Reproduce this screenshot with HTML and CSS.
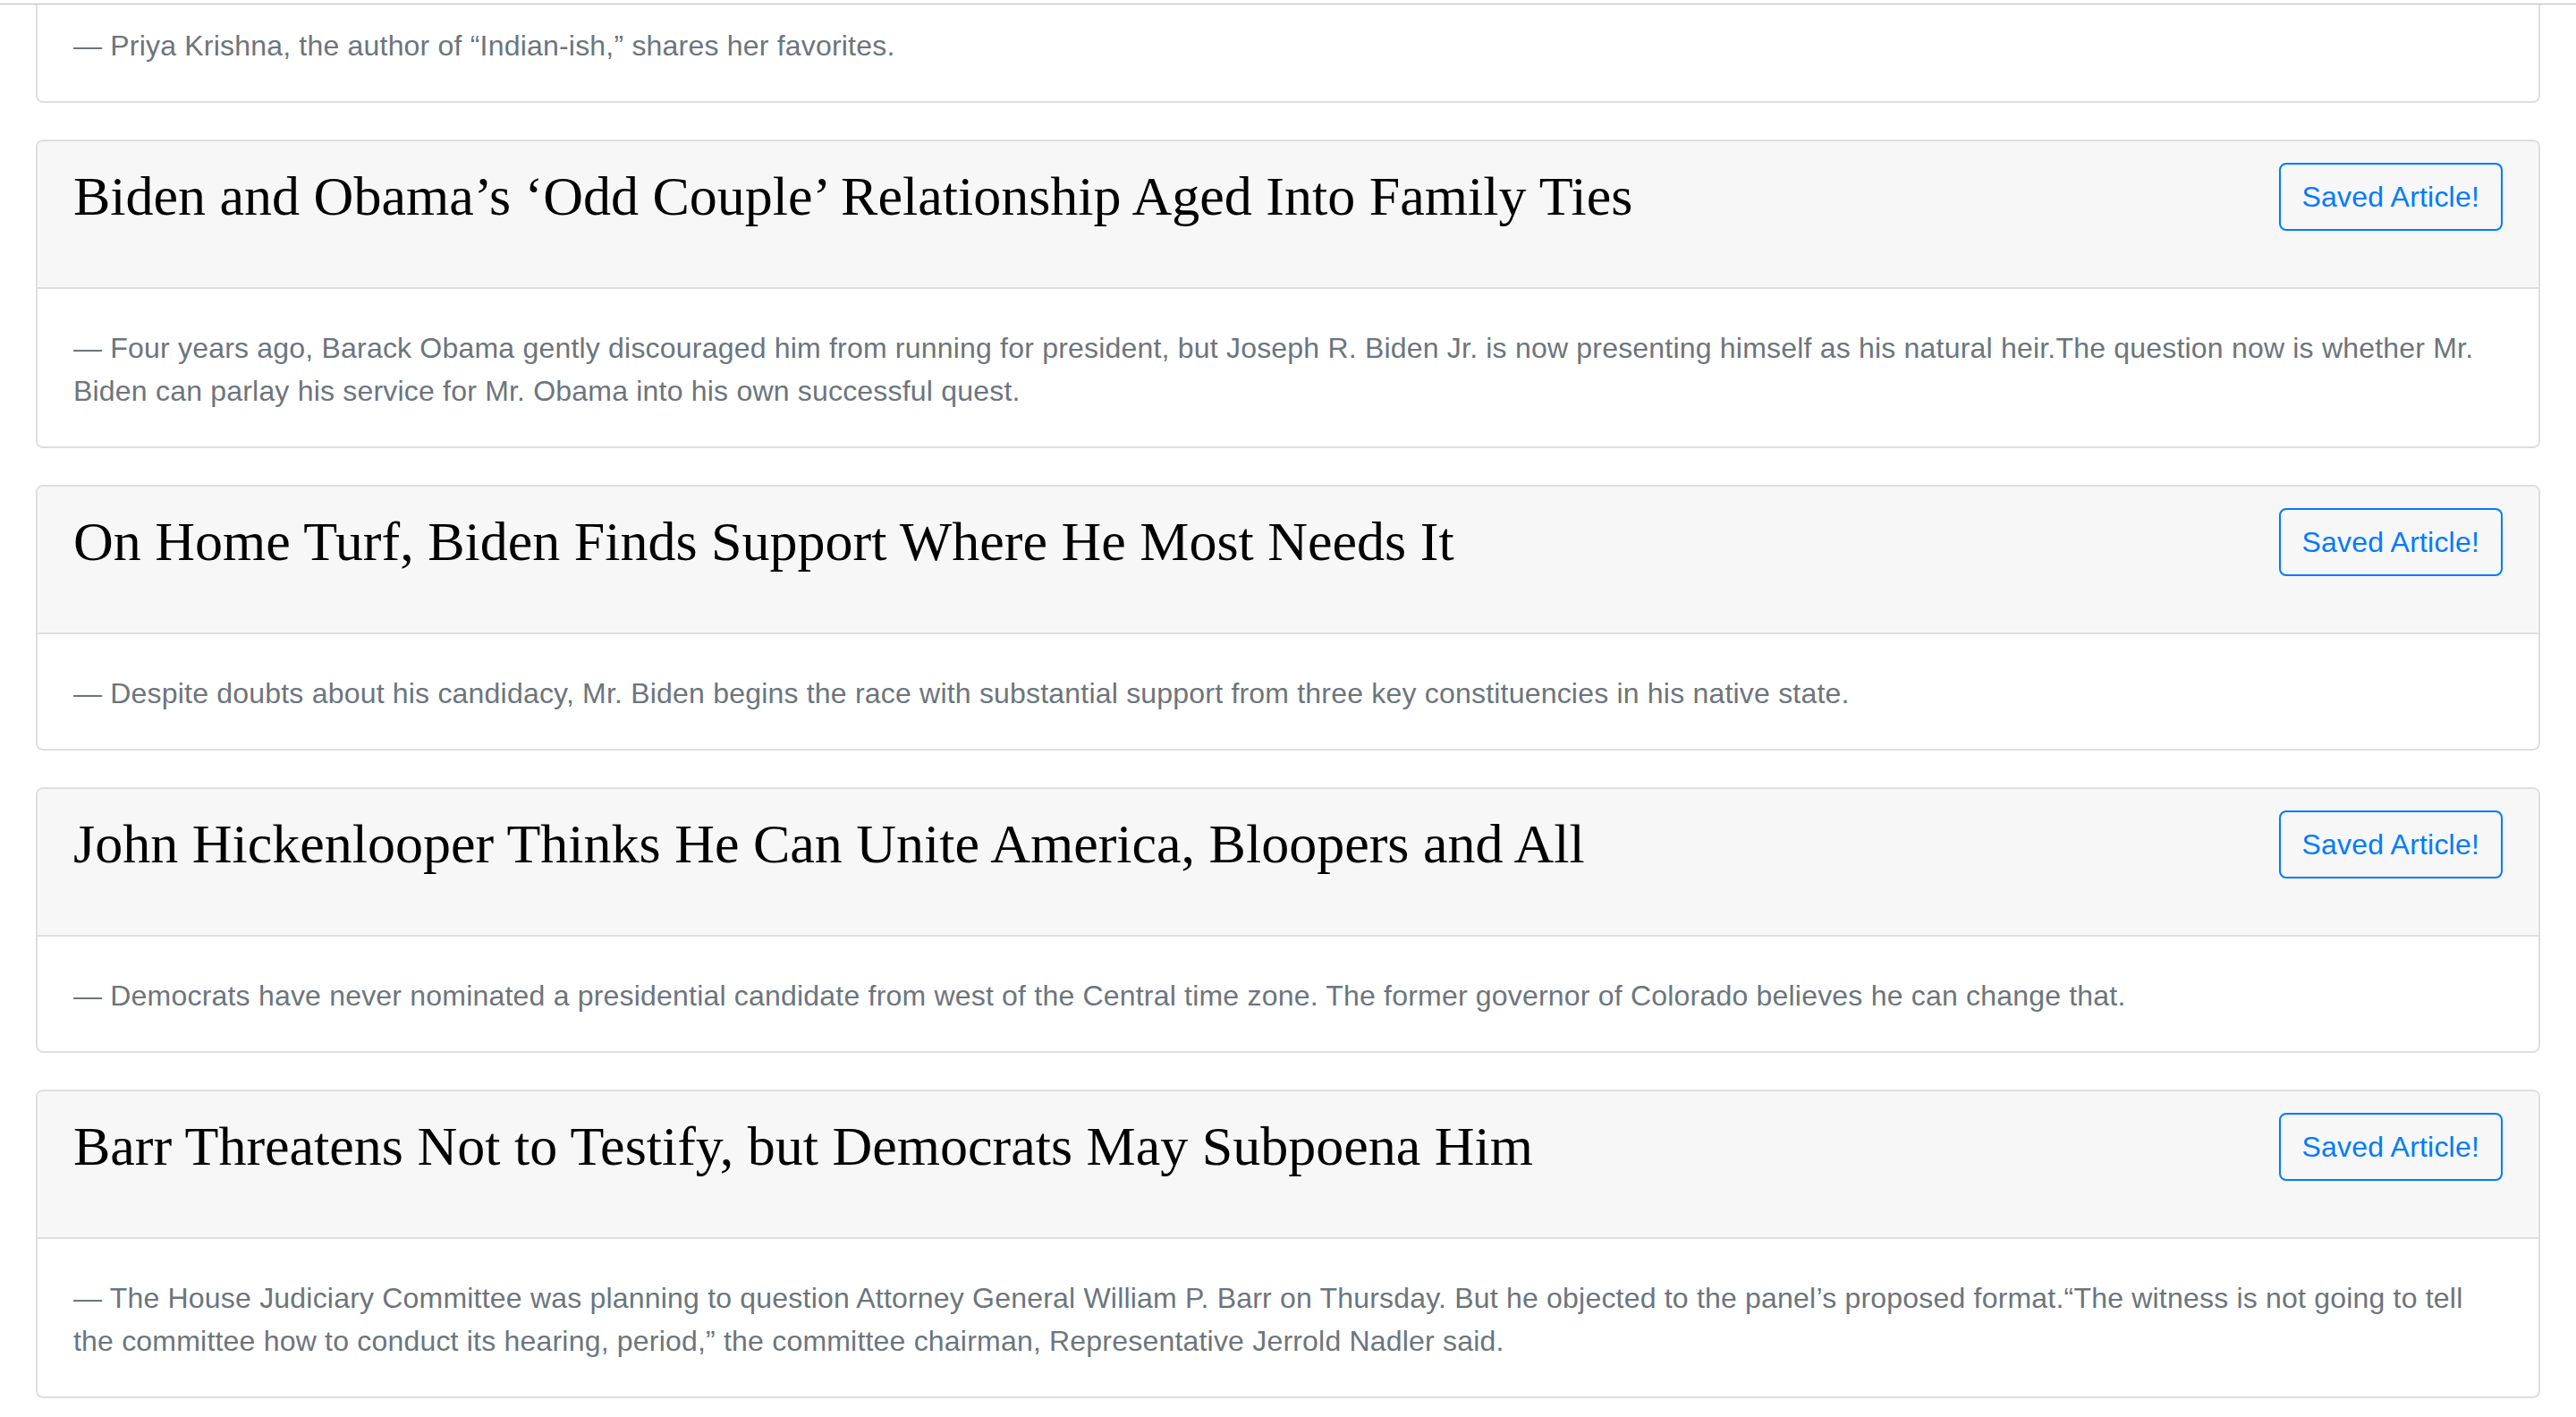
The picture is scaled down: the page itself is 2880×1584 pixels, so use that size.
FILE: index.html
```html
<!DOCTYPE html>
<html lang="en">
<head>
<meta charset="utf-8">
<title>Saved Articles</title>
<link rel="stylesheet" href="styles.css">
</head>
<body>
<div class="topbar"></div>
<main class="articles">
  <div class="card card-cut">
    <div class="card-body">
      <p class="summary">— Priya Krishna, the author of “Indian-ish,” shares her favorites.</p>
    </div>
  </div>

  <div class="card">
    <div class="card-header">
      <h2 class="title">Biden and Obama’s ‘Odd Couple’ Relationship Aged Into Family Ties</h2>
      <button class="btn-saved" type="button">Saved Article!</button>
    </div>
    <div class="card-body">
      <p class="summary">— Four years ago, Barack Obama gently discouraged him from running for president, but Joseph R. Biden Jr. is now presenting himself as his natural heir.The question now is whether Mr. Biden can parlay his service for Mr. Obama into his own successful quest.</p>
    </div>
  </div>

  <div class="card">
    <div class="card-header">
      <h2 class="title">On Home Turf, Biden Finds Support Where He Most Needs It</h2>
      <button class="btn-saved" type="button">Saved Article!</button>
    </div>
    <div class="card-body">
      <p class="summary">— Despite doubts about his candidacy, Mr. Biden begins the race with substantial support from three key constituencies in his native state.</p>
    </div>
  </div>

  <div class="card">
    <div class="card-header">
      <h2 class="title">John Hickenlooper Thinks He Can Unite America, Bloopers and All</h2>
      <button class="btn-saved" type="button">Saved Article!</button>
    </div>
    <div class="card-body">
      <p class="summary">— Democrats have never nominated a presidential candidate from west of the Central time zone. The former governor of Colorado believes he can change that.</p>
    </div>
  </div>

  <div class="card">
    <div class="card-header">
      <h2 class="title">Barr Threatens Not to Testify, but Democrats May Subpoena Him</h2>
      <button class="btn-saved" type="button">Saved Article!</button>
    </div>
    <div class="card-body">
      <p class="summary">— The House Judiciary Committee was planning to question Attorney General William P. Barr on Thursday. But he objected to the panel’s proposed format.“The witness is not going to tell the committee how to conduct its hearing, period,” the committee chairman, Representative Jerrold Nadler said.</p>
    </div>
  </div>
</main>
</body>
</html>
```

FILE: styles.css
```css
* {
  box-sizing: border-box;
}

html, body {
  margin: 0;
  padding: 0;
  background: #ffffff;
}

body {
  font-family: "Liberation Sans", Arial, sans-serif;
  font-size: 32px;
  line-height: 48px;
  color: #212529;
}

.topbar {
  height: 5px;
  border-bottom: 1px solid #bcbcbc;
}

.articles {
  padding: 0 40px;
  display: flex;
  flex-direction: column;
  gap: 41px;
}

.card {
  background: #ffffff;
  border: 2px solid #dfdfdf;
  border-radius: 8px;
  overflow: hidden;
}

.card-cut {
  border-top: none;
  border-top-left-radius: 0;
  border-top-right-radius: 0;
}

.card-cut .card-body {
  padding-top: 22px;
}

.card-header {
  display: flex;
  align-items: flex-start;
  justify-content: space-between;
  gap: 40px;
  padding: 24px 40px;
  background: #f7f7f7;
  border-bottom: 2px solid #dfdfdf;
}

.title {
  margin: 0 0 41px 0;
  font-family: "Liberation Serif", "Times New Roman", serif;
  font-weight: 400;
  font-size: 62px;
  line-height: 74px;
  color: #000000;
}

.btn-saved {
  flex: none;
  font-family: "Liberation Sans", Arial, sans-serif;
  font-size: 32px;
  line-height: 48px;
  letter-spacing: 0.2px;
  padding: 12px 24px;
  color: #007bff;
  background: transparent;
  border: 2px solid #007bff;
  border-radius: 8px;
}

.card-body {
  padding: 42px 40px 38px;
}

.summary {
  margin: 0;
  color: #6c757d;
  letter-spacing: 0.2px;
}
```
